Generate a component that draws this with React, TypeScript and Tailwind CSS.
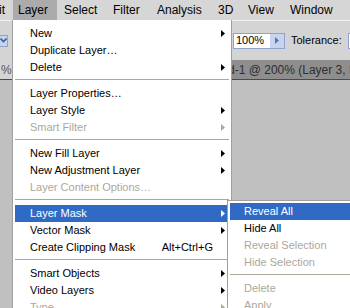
import type { ReactNode } from "react";

type Item =
  | { kind: "sep" }
  | {
      kind: "item";
      label: string;
      sub?: boolean;
      disabled?: boolean;
      active?: boolean;
      shortcut?: string;
    };

const layerMenu: Item[] = [
  { kind: "item", label: "New", sub: true },
  { kind: "item", label: "Duplicate Layer…" },
  { kind: "item", label: "Delete", sub: true },
  { kind: "sep" },
  { kind: "item", label: "Layer Properties…" },
  { kind: "item", label: "Layer Style", sub: true },
  { kind: "item", label: "Smart Filter", sub: true, disabled: true },
  { kind: "sep" },
  { kind: "item", label: "New Fill Layer", sub: true },
  { kind: "item", label: "New Adjustment Layer", sub: true },
  { kind: "item", label: "Layer Content Options…", disabled: true },
  { kind: "sep" },
  { kind: "item", label: "Layer Mask", sub: true, active: true },
  { kind: "item", label: "Vector Mask", sub: true },
  { kind: "item", label: "Create Clipping Mask", shortcut: "Alt+Ctrl+G" },
  { kind: "sep" },
  { kind: "item", label: "Smart Objects", sub: true },
  { kind: "item", label: "Video Layers", sub: true },
  { kind: "item", label: "Type", sub: true, disabled: true },
];

const maskMenu: Item[] = [
  { kind: "item", label: "Reveal All", active: true },
  { kind: "item", label: "Hide All" },
  { kind: "item", label: "Reveal Selection", disabled: true },
  { kind: "item", label: "Hide Selection", disabled: true },
  { kind: "sep" },
  { kind: "item", label: "Delete", disabled: true },
  { kind: "item", label: "Apply", disabled: true },
];

function Arrow({ color }: { color: string }) {
  return (
    <svg width="4" height="7" viewBox="0 0 4 7" className="shrink-0">
      <polygon points="0,0 4,3.5 0,7" fill={color} />
    </svg>
  );
}

function MenuRows({ items, textPad }: { items: Item[]; textPad: string }) {
  return (
    <>
      {items.map((it, i) => {
        if (it.kind === "sep") {
          return (
            <div key={i} className="h-[9px] pt-[3px]">
              <div className="h-px bg-[#aca899]" />
            </div>
          );
        }
        const color = it.active
          ? "text-white"
          : it.disabled
            ? "text-[#aca899]"
            : "text-black";
        const arrowColor = it.active ? "#ffffff" : it.disabled ? "#aca899" : "#000000";
        return (
          <div
            key={i}
            className={`flex h-[17px] items-center whitespace-nowrap leading-[17px] ${textPad} ${color} ${
              it.active ? "bg-[#316ac5]" : ""
            }`}
          >
            <span>{it.label}</span>
            {it.shortcut && <span className="ml-auto mr-[16px]">{it.shortcut}</span>}
            {it.sub && (
              <span className="ml-auto mr-[4px] flex items-center">
                <Arrow color={arrowColor} />
              </span>
            )}
          </div>
        );
      })}
    </>
  );
}

function BarItem({ children, className }: { children: ReactNode; className: string }) {
  return (
    <div className={`flex h-full shrink-0 items-center whitespace-nowrap ${className}`}>{children}</div>
  );
}

export default function App() {
  return (
    <div
      className="relative flex h-[308px] w-[350px] flex-col overflow-hidden bg-[#c0c0c0] text-[11px] text-black"
      style={{ fontFamily: '"Liberation Sans", Arial, sans-serif' }}
    >
      {/* menu bar */}
      <div className="flex h-[20px] shrink-0 bg-[#d6d6d6] text-[12px]">
        <BarItem className="w-[13px] justify-end overflow-hidden pr-[8px]">Edit</BarItem>
        <BarItem className="w-[44px] bg-[#ababab] pl-[5px]">Layer</BarItem>
        <BarItem className="w-[49px] pl-[7px]">Select</BarItem>
        <BarItem className="w-[44px] pl-[7px]">Filter</BarItem>
        <BarItem className="w-[61px] pl-[7px]">Analysis</BarItem>
        <BarItem className="w-[30px] pl-[7px]">3D</BarItem>
        <BarItem className="w-[42px] pl-[7px]">View</BarItem>
        <BarItem className="pl-[7px]">Window</BarItem>
      </div>

      {/* options bar */}
      <div className="flex h-[40px] shrink-0 items-center border-t border-[#f0f0f0] bg-[#d4d4d4]">
        <div className="flex h-[12px] w-[10px] items-center justify-center border border-l-0 border-[#8ea4cc] bg-[#c6d4ee]">
          <svg width="7" height="5" viewBox="0 0 7 5">
            <polyline points="0.5,0.5 3.5,3.5 6.5,0.5" fill="none" stroke="#3b5fa8" strokeWidth="1.6" />
          </svg>
        </div>
        <div className="ml-[225px] flex h-[16px] items-stretch border border-[#8ea4cc] bg-white">
          <div className="flex w-[36px] items-center pl-[2px]">100%</div>
          <div className="flex w-[14px] items-center justify-center bg-[#c6d4ee]">
            <Arrow color="#5a78b0" />
          </div>
        </div>
        <div className="ml-[6px] whitespace-nowrap">Tolerance:</div>
        <div className="ml-[6px] flex h-[16px] w-[30px] shrink-0 items-center border border-[#8ea4cc] bg-white pl-[2px]">
          50
        </div>
      </div>

      {/* document tabs */}
      <div className="flex h-[20px] shrink-0 border-b border-[#4a4a4a] text-[12px]">
        <div className="flex w-[40px] shrink-0 items-center bg-[#d4d4d4] pl-[1px] text-[#555555]">
          %
        </div>
        <div className="flex flex-1 items-center whitespace-nowrap bg-[#8e8e8e] pl-[154px] text-[#2e2e2e]">
          Untitled-1 @ 200% (Layer 3, RGB/8) *
        </div>
      </div>

      {/* canvas */}
      <div className="flex-1 bg-[#c0c0c0]" />

      {/* Layer menu */}
      <div className="absolute left-[12px] top-[20px] w-[220px] border border-t-0 border-[#a0a0a0] bg-white px-[2px] pt-[5px]">
        <MenuRows items={layerMenu} textPad="pl-[15px]" />
      </div>

      {/* Layer Mask submenu */}
      <div className="absolute left-[227px] top-[200px] w-[140px] border border-[#a0a0a0] bg-white px-[2px] pt-[2px] pb-[2px]">
        <MenuRows items={maskMenu} textPad="pl-[14px]" />
      </div>
    </div>
  );
}
